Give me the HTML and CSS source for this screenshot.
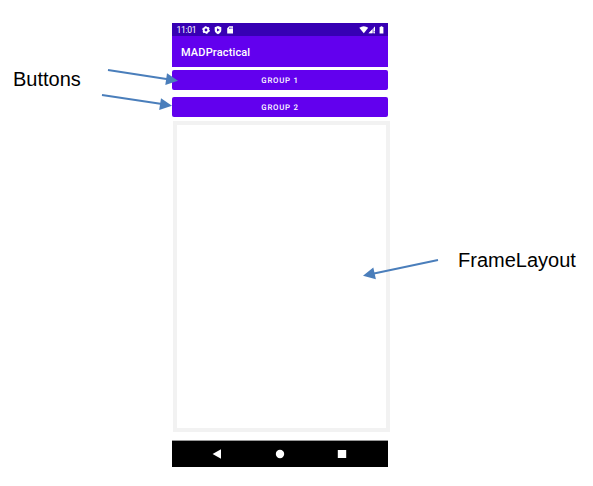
FILE: index.html
```html
<!DOCTYPE html>
<html lang="en">
<head>
<meta charset="utf-8">
<title>MADPractical</title>
<link rel="stylesheet" href="styles.css">
</head>
<body>
<main class="figure">
  <p class="label label-buttons">Buttons</p>
  <section class="phone">
    <header class="status">
      <span class="time">11:01</span>
      <svg class="status-left" width="34" height="10" viewBox="0 0 34 10" fill="#fff">
        <circle cx="5" cy="5" r="2.3" fill="none" stroke="#fff" stroke-width="1.8"/>
        <circle cx="5" cy="5" r="3.3" fill="none" stroke="#fff" stroke-width="1.1" stroke-dasharray="1.8 1.656"/>
        <path fill-rule="evenodd" d="M17 1L20.3 2.2V5C20.3 7 19 8.5 17 9.2C15 8.5 13.7 7 13.7 5V2.2ZM16 3.2V6.6L18.8 4.9Z"/>
        <path fill-rule="evenodd" d="M28.2 1.2H32V8.6H26.2V3.2ZM28.2 2.5V4H28.8V2.5ZM29.5 2.5V4H30.1V2.5ZM30.7 2.5V4H31.3V2.5Z"/>
      </svg>
      <svg class="status-right" width="26" height="10" viewBox="0 0 26 10" fill="#fff">
        <path d="M0.3 2.8Q4.8 -0.2 9.2 2.8L4.8 8.2Z"/>
        <path d="M9.5 8.2L16 1.5V8.2Z" opacity=".55"/>
        <path d="M9.5 8.2L13.4 4.2V8.2ZM14.6 7.2H16V8.2H14.6ZM14.8 2.8L16 1.5V6H14.8Z"/>
        <path d="M20.6 2H21.6V1.2H23.4V2H24.4V8.5H20.6Z"/>
      </svg>
    </header>
    <h1 class="appbar">MADPractical</h1>
    <button class="btn">GROUP 1</button>
    <button class="btn">GROUP 2</button>
    <div class="frame"></div>
    <nav class="nav">
      <svg width="216" height="26" viewBox="0 0 216 26" fill="#fff">
        <path d="M40.6 13L49 8.3V17.7Z"/>
        <circle cx="108" cy="13" r="4.2"/>
        <rect x="165.8" y="9" width="8.4" height="8"/>
      </svg>
    </nav>
  </section>
  <p class="label label-frame">FrameLayout</p>
  <svg class="arrows" width="593" height="486" viewBox="0 0 593 486" fill="#4a7ebb">
    <g stroke="#4a7ebb" stroke-width="2">
      <path d="M108 70L168 79.3"/>
      <path d="M102 95L162 104.1"/>
      <path d="M438 260L374 273.6"/>
    </g>
    <path d="M178 80.8L165.3 85L167 73.3Z"/>
    <path d="M172 105.7L159.2 109.9L161 98.2Z"/>
    <path d="M363 275.8L373.3 267.5L375.9 279.3Z"/>
  </svg>
</main>
</body>
</html>
```
FILE: styles.css
```css
* {
  box-sizing: border-box;
}

body {
  margin: 0;
  background: #fff;
}

.figure {
  position: relative;
  display: grid;
  grid-template-columns: 172px 216px 205px;
  align-items: start;
  width: 593px;
  height: 486px;
  overflow: hidden;
}

.label {
  margin: 0;
  font: 20px/24px "Liberation Sans", Arial, sans-serif;
  color: #000;
}

.label-buttons {
  padding: 67px 0 0 13px;
}

.label-frame {
  padding: 248px 0 0 70px;
}

.phone {
  display: flex;
  flex-direction: column;
  padding-top: 23px;
  font-family: Roboto, sans-serif;
}

.status {
  display: flex;
  align-items: center;
  height: 13px;
  padding: 0 3px 0 4.5px;
  background: #3700b3;
  color: #fff;
}

.time {
  width: 24.5px;
  padding-top: 2px;
  font-size: 8.6px;
  line-height: 13px;
  letter-spacing: -0.3px;
}

.status-right {
  margin-left: auto;
}

.appbar {
  height: 31px;
  margin: 0 0 3px;
  padding: 1px 0 0 9px;
  background: #6200ee;
  color: #fff;
  font-size: 11px;
  font-weight: 500;
  line-height: 32px;
  letter-spacing: 0.15px;
}

.btn {
  height: 20px;
  margin: 0 0 7px;
  padding: 1px 0 0;
  border: 0;
  border-radius: 2px;
  background: #6200ee;
  color: #fff;
  font: 500 7.8px/19px Roboto, sans-serif;
  letter-spacing: 0.75px;
  text-rendering: geometricPrecision;
}

.frame {
  width: 217px;
  height: 311px;
  margin: -3px 0 0 1px;
  border: 4px solid #f2f2f2;
}

.nav {
  height: 27px;
  margin-top: 8px;
  border-top: 1px solid #999;
  background: #000;
}

.nav svg {
  display: block;
}

.arrows {
  position: absolute;
  top: 0;
  left: 0;
}
```
